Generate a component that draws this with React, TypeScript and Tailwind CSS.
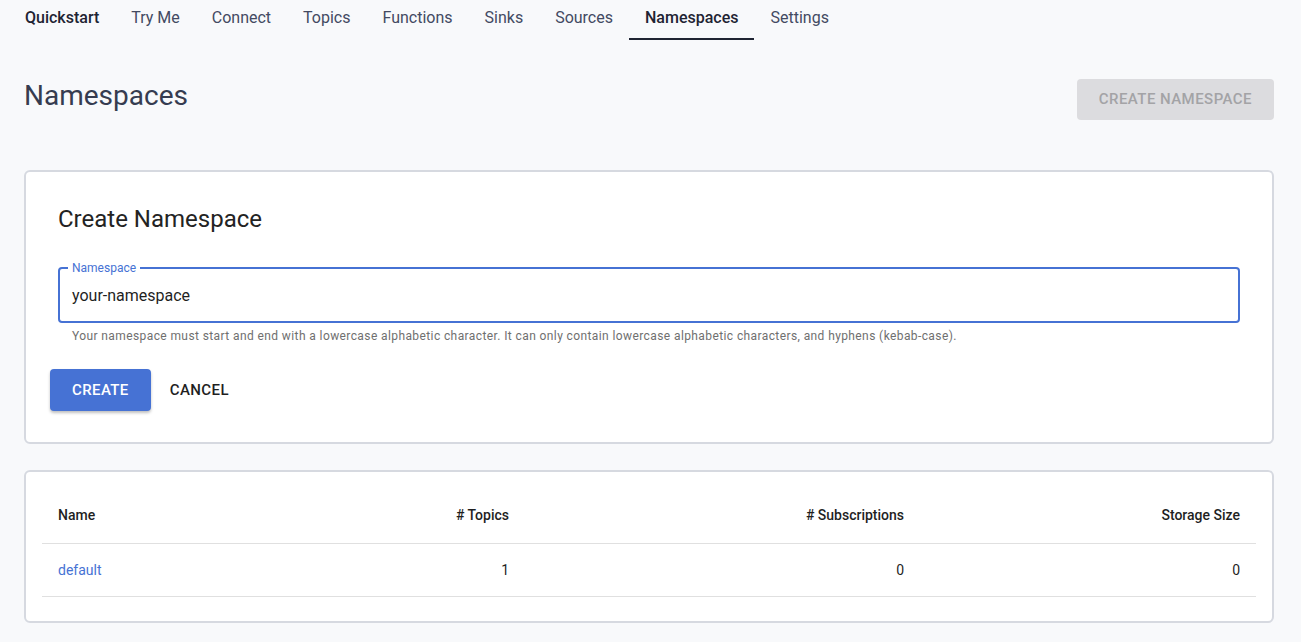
const TABS = [
  "Quickstart",
  "Try Me",
  "Connect",
  "Topics",
  "Functions",
  "Sinks",
  "Sources",
  "Namespaces",
  "Settings",
];

const ROWS = [{ name: "default", topics: 1, subscriptions: 0, storage: 0 }];

export default function App() {
  return (
    <div className="min-h-[642px] bg-[#f8f9fb] font-['Roboto',sans-serif]">
      {/* Tabs */}
      <nav className="flex h-10 pl-[9px]">
        {TABS.map((tab) => {
          const active = tab === "Namespaces";
          const strong = active || tab === "Quickstart";
          return (
            <div
              key={tab}
              className={
                active
                  ? "flex h-10 items-start border-b-2 border-[#1f2433] px-4 pt-[6px] text-[16px] font-medium text-[#1f2433]"
                  : strong
                    ? "flex h-10 items-start px-4 pt-[6px] text-[16px] font-medium text-[#1f2433]"
                    : "flex h-10 items-start px-4 pt-[6px] text-[16px] text-[#434a62]"
              }
            >
              {tab}
            </div>
          );
        })}
      </nav>

      <div className="px-6 pr-[27px]">
        {/* Header row */}
        <div className="mt-[39px] flex items-start justify-between">
          <h1 className="mt-[-1px] text-[28px] leading-9 text-[#363c50]">Namespaces</h1>
          <button className="h-[41px] rounded-[4px] bg-[#dcdcdf] px-[22px] text-[15px] font-medium tracking-[0.45px] text-[#a3a3a6]">
            CREATE NAMESPACE
          </button>
        </div>

        {/* Create card */}
        <div className="mt-[50px] rounded-[6px] border-2 border-[#d6d9e0] bg-white px-8 pb-[31px] pt-[31px]">
          <h2 className="text-[24px] leading-8 text-[#232323]">Create Namespace</h2>
          <div className="relative mt-8 h-14 rounded-[4px] border-2 border-[#4672d4] pl-3">
            <span className="absolute -top-[9px] left-[8px] bg-white px-[4px] text-[12px] leading-4 text-[#4672d4]">
              Namespace
            </span>
            <div className="flex h-full items-center pt-[2px] text-[16px] text-[#1f1f1f]">your-namespace</div>
          </div>
          <p className="mt-[5px] pl-[14px] text-[12px] leading-4 tracking-[0.4px] text-[#6f6f6f]">
            Your namespace must start and end with a lowercase alphabetic character. It can only contain lowercase alphabetic characters, and hyphens (kebab-case).
          </p>
          <div className="-ml-2 mt-[25px] flex items-center gap-[3px]">
            <button className="h-[42px] rounded-[4px] bg-[#4672d4] px-[22px] text-[15px] font-medium tracking-[0.4px] text-white shadow-[0_2px_3px_rgba(0,0,0,0.25)]">
              CREATE
            </button>
            <button className="h-[42px] px-4 text-[15px] font-medium tracking-[0.4px] text-[#1f1f1f]">CANCEL</button>
          </div>
        </div>

        {/* Table card */}
        <div className="mt-[26px] rounded-[6px] border-2 border-[#d6d9e0] bg-white px-4 pb-[24px] pt-[16px]">
          <div className="grid h-14 grid-cols-[240px_243px_395px_1fr] items-center border-b border-[#e0e0e0] text-[14px] font-medium text-[#1f1f1f]">
            <div className="px-4">Name</div>
            <div className="px-4 text-right"># Topics</div>
            <div className="px-4 text-right"># Subscriptions</div>
            <div className="px-4 text-right">Storage Size</div>
          </div>
          {ROWS.map((row) => (
            <div
              key={row.name}
              className="grid h-[53px] grid-cols-[240px_243px_395px_1fr] items-center border-b border-[#e0e0e0] text-[14px] text-[#1f1f1f]"
            >
              <div className="px-4 text-[#4672d4]">{row.name}</div>
              <div className="px-4 text-right">{row.topics}</div>
              <div className="px-4 text-right">{row.subscriptions}</div>
              <div className="px-4 text-right">{row.storage}</div>
            </div>
          ))}
        </div>
      </div>
    </div>
  );
}
